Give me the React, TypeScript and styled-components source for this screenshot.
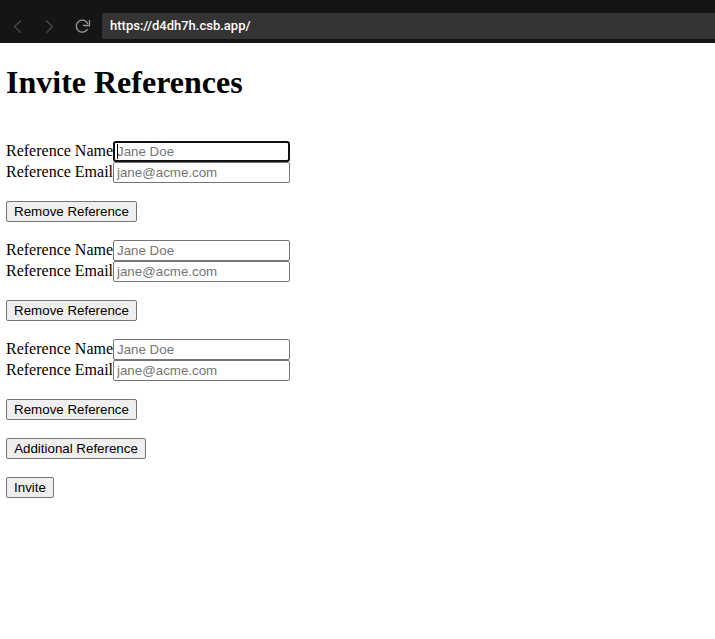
import React from "react";
import styled, { createGlobalStyle } from "styled-components";

const GlobalStyle = createGlobalStyle`
  body {
    margin: 0;
    background: #fff;
    color: #000;
    font-family: "Liberation Serif", "Times New Roman", serif;
    font-size: 16px;
    overflow: hidden;
  }
`;

const Toolbar = styled.header`
  display: flex;
  align-items: flex-end;
  box-sizing: border-box;
  height: 43px;
  background: #151515;
`;

const NavIcons = styled.nav`
  display: flex;
  width: 102px;
  height: 33px;
`;

const AddressBar = styled.div`
  flex: 1;
  box-sizing: border-box;
  height: 26px;
  margin: 0 0 4px;
  padding: 0 8px;
  background: #343434;
  border-radius: 2px 0 0 2px;
  color: #fff;
  font: 500 13px/26px Roboto, sans-serif;
`;

const Page = styled.main`
  padding: 0 6px;
`;

const Title = styled.h1`
  margin: 0;
  padding: 20px 0 40px;
  font-size: 32px;
  line-height: 38px;
`;

const Group = styled.section`
  height: 99px;
`;

const Field = styled.div`
  display: flex;
  align-items: center;
  height: 21px;
`;

const Label = styled.label`
  width: 107px;
  height: 21px;
  line-height: 20px;
  white-space: nowrap;
`;

const InputWrap = styled.span`
  position: relative;
  display: flex;
`;

const Caret = styled.span`
  position: absolute;
  left: 4px;
  top: 3px;
  width: 1px;
  height: 15px;
  background: #000;
`;

const Input = styled.input<{ $focused?: boolean }>`
  box-sizing: border-box;
  width: 177px;
  height: 21px;
  padding: ${(p) => (p.$focused ? "1px 2px" : "2px 3px")};
  border: ${(p) => (p.$focused ? "2px solid #101010" : "1px solid #767676")};
  border-radius: ${(p) => (p.$focused ? "3px" : "2px")};
  outline: none;
  font: 13.333px "Liberation Sans", Arial, sans-serif;
  &::placeholder {
    color: #757575;
  }
`;

const Button = styled.button<{ $width: number }>`
  display: block;
  box-sizing: border-box;
  width: ${(p) => p.$width}px;
  height: 21px;
  padding: 1px 0;
  border: 1px solid #767676;
  border-radius: 2px;
  background: #efefef;
  color: #000;
  font: 13.333px "Liberation Sans", Arial, sans-serif;
`;

const RemoveButton = styled(Button)`
  margin: 18px 0 0;
`;

const Actions = styled.div`
  display: grid;
  gap: 18px;
`;

const references = [0, 1, 2];

export default function App() {
  return (
    <>
      <GlobalStyle />
      <Toolbar>
        <NavIcons>
          <svg width="102" height="33" fill="none" strokeWidth="1.2">
            <path d="M21 10.5 14.5 16.5l6.5 6.5M46 10.5l6.5 6-6.5 6.5" stroke="#4a4a4a" />
            <path d="M87.6 19a6 6 0 1 1 .3-5M89.5 10v5.5H83" stroke="#999" strokeWidth="1.3" />
          </svg>
        </NavIcons>
        <AddressBar>https://d4dh7h.csb.app/</AddressBar>
      </Toolbar>
      <Page>
        <Title>Invite References</Title>
        {references.map((i) => (
          <Group key={i}>
            <Field>
              <Label>Reference Name</Label>
              <InputWrap>
                <Input placeholder="Jane Doe" $focused={i === 0} />
                {i === 0 && <Caret />}
              </InputWrap>
            </Field>
            <Field>
              <Label>Reference Email</Label>
              <Input placeholder="jane@acme.com" />
            </Field>
            <RemoveButton $width={131}>Remove Reference</RemoveButton>
          </Group>
        ))}
        <Actions>
          <Button $width={140}>Additional Reference</Button>
          <Button $width={48}>Invite</Button>
        </Actions>
      </Page>
    </>
  );
}
